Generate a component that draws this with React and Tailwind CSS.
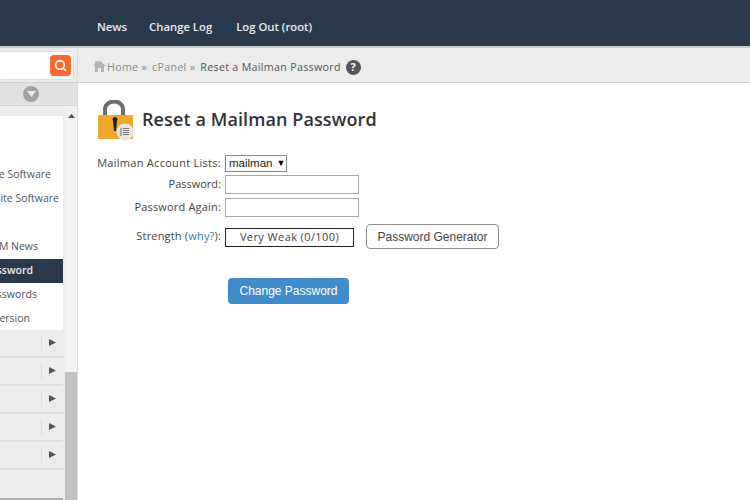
import React from 'react';
import { Search } from 'lucide-react';

const menuItems = [
  { label: '', right: '' },
  { label: 'e Software', right: 'pr-[12px]' },
  { label: 'Site Software', right: 'pr-[4px]' },
  { label: '', right: '' },
  { label: 'M News', right: 'pr-[25px]' },
  { label: 'ssword', right: 'pr-[30px]', active: true },
  { label: 'sswords', right: 'pr-[26px]' },
  { label: 'ersion', right: 'pr-[33px]' },
];

const Label = ({ children, tracking = 'tracking-[0.18px]' }) => (
  <div className={`w-[123px] shrink-0 whitespace-nowrap flex justify-end text-[11px] ${tracking} text-[#444]`}>
    <span>{children}</span>
  </div>
);

const App = () => {
  return (
    <div className="w-[750px] h-[500px] overflow-hidden bg-white font-['Open_Sans',sans-serif]">
      {/* Top bar */}
      <div className="h-[48px] bg-[#2a3a4d] border-b-2 border-[#c4c8cc] flex items-center pl-[97px] pt-[8px] gap-[24px] text-[11.3px] font-semibold text-[#e8ebee]">
        <span className="-mr-[2px]">News</span>
        <span>Change Log</span>
        <span>Log Out (root)</span>
      </div>

      <div className="flex h-[452px]">
        {/* Sidebar */}
        <div className="w-[78px] shrink-0 flex flex-col bg-[#ececec] border-r border-[#dcdcdc]">
          <div className="h-[35px] shrink-0 pt-[4px] pr-[4px] border-b border-[#d4d4d4]">
            <div className="h-[27px] bg-white rounded-r-[3px] shadow-[0_0_2px_#bbb] flex justify-end items-center pr-[2px]">
              <div className="w-[21px] h-[21px] rounded-[4px] bg-[#fb6a2c] flex items-center justify-center">
                <Search size={13} strokeWidth={3} className="text-white" />
              </div>
            </div>
          </div>
          <div className="h-[23px] shrink-0 bg-[#e2e2e2] flex items-center pl-[23px] border-b border-[#d4d4d4]">
            <div className="w-[16px] h-[16px] rounded-full bg-[#a3a3a3] flex items-center justify-center">
              <svg width="9" height="6" viewBox="0 0 9 6"><path d="M0 0 H9 L4.5 6 Z" fill="#ececec" /></svg>
            </div>
          </div>
          <div className="flex flex-1 min-h-0">
            <div className="w-[63px] shrink-0 flex flex-col">
              <div className="h-[10px] shrink-0" />
              <div className="h-[214px] shrink-0 bg-white pt-[23px] text-[10.5px] text-[#555] overflow-hidden">
                {menuItems.map((item, i) => (
                  <div
                    key={i}
                    className={`h-[24px] ${item.right} flex items-center justify-end whitespace-nowrap overflow-hidden ${item.active ? 'bg-[#2a3a4d] text-[#eef0f2] font-semibold' : ''}`}
                  >
                    {item.label}
                  </div>
                ))}
              </div>
              {[0, 1, 2, 3, 4].map((i) => (
                <div key={i} className="h-[28px] shrink-0 pb-[1px] border-b-2 border-[#dedede] flex items-center justify-end">
                  <div className="h-[16px] w-[1px] bg-[#dcdcdc] mr-[7px]" />
                  <svg width="7" height="7" viewBox="0 0 7 7" className="mr-[7px]">
                    <path d="M0 0 L7 3.5 L0 7 Z" fill="#555" />
                  </svg>
                </div>
              ))}
              <div className="h-[30px] shrink-0 border-b-2 border-[#b0b0b0]" />
            </div>
            <div className="w-[2px] shrink-0" />
            <div className="w-[12px] shrink-0 bg-[#f1f1f1] flex flex-col">
              <div className="h-[266px] shrink-0 pt-[8px] flex justify-center">
                <svg width="7" height="4" viewBox="0 0 7 4"><path d="M0 4 L3.5 0 L7 4 Z" fill="#505050" /></svg>
              </div>
              <div className="flex-1 bg-[#c1c1c1]" />
            </div>
          </div>
        </div>

        {/* Main */}
        <div className="flex-1 flex flex-col min-w-0">
          <div className="h-[35px] shrink-0 bg-[#ececec] border-b border-[#d4d4d4] flex items-center pl-[15px] pt-[4px] text-[10.7px] tracking-[0.3px] text-[#888]">
            <svg width="13" height="12" viewBox="0 0 13 12" className="-mt-[2px]">
              <path d="M6.5 0.5 L13 6 H11 V12 H8 V8 H5 V12 H2 V6 H0 L2 4.3 V1 H4 V2.6 Z" fill="#b4b4b4" />
            </svg>
            <span className="ml-[1px]">Home »</span>
            <span className="ml-[5px]">cPanel »</span>
            <span className="ml-[5px] text-[#555]">Reset a Mailman Password</span>
            <span className="ml-[5px] w-[15px] h-[15px] rounded-full bg-[#555] text-white text-[11px] font-bold flex items-center justify-center">?</span>
          </div>

          <div className="pl-[20px] pt-[17px]">
            <div className="flex items-center h-[42px] gap-[8px]">
              <svg width="36" height="42" viewBox="0 0 36 42">
                <path d="M7 18 V9 a9 7.5 0 0 1 18 0 V18" fill="none" stroke="#6c6c6c" strokeWidth="4" />
                <rect x="0" y="15" width="35" height="24" rx="1" fill="#efa82c" />
                <path d="M15 21 a2.5 2.5 0 1 1 4 0 L18 31 H16 Z" fill="#222" />
                <circle cx="27" cy="32" r="8.5" fill="#e6e6e6" />
                <rect x="22" y="28" width="2" height="8" fill="#9db38f" />
                <path d="M25 28.5 h6 M25 30.5 h6 M25 32.5 h6 M25 34.5 h6" stroke="#777" strokeWidth="1" />
              </svg>
              <h1 className="-mt-[4px] text-[18px] font-semibold tracking-[0.1px] text-[#333] whitespace-nowrap">Reset a Mailman Password</h1>
            </div>

            <div className="mt-[13px] flex items-center h-[17px]">
              <Label tracking="tracking-[0.28px]">Mailman Account Lists:</Label>
              <div className="ml-[4px] w-[62px] h-[17px] bg-white border border-[#8a8a8a] flex items-center pl-[3px] text-[11.5px] text-[#222] font-['Liberation_Sans',sans-serif]">
                mailman
                <span className="ml-[4px] text-[9px] text-black">▼</span>
              </div>
            </div>
            <div className="mt-[3px] flex items-center h-[19px]">
              <Label tracking="tracking-[0px]">Password:</Label>
              <div className="ml-[4px] w-[134px] h-[19px] border border-[#a9a9a9] bg-white" />
            </div>
            <div className="mt-[4px] flex items-center h-[19px]">
              <Label>Password Again:</Label>
              <div className="ml-[4px] w-[134px] h-[19px] border border-[#a9a9a9] bg-white" />
            </div>
            <div className="mt-[7px] flex items-center h-[25px]">
              <Label>Strength (<span className="text-[#337ab7]">why?</span>):</Label>
              <div className="ml-[4px] mt-[2px] w-[129px] h-[19px] border border-[#222] flex items-center justify-center text-[11px] tracking-[0.4px] text-[#444]">Very Weak (0/100)</div>
              <div className="ml-[12px] w-[133px] h-[25px] border border-[#8c8c8c] rounded-[4px] flex items-center justify-center text-[12px] text-[#444] font-['Liberation_Sans',sans-serif]">Password Generator</div>
            </div>
            <div className="mt-[29px] ml-[130px] w-[121px] h-[26px] bg-[#428bca] rounded-[4px] flex items-center justify-center text-[12px] text-white font-['Liberation_Sans',sans-serif]">Change Password</div>
          </div>
        </div>
      </div>
    </div>
  );
};

export default App;
